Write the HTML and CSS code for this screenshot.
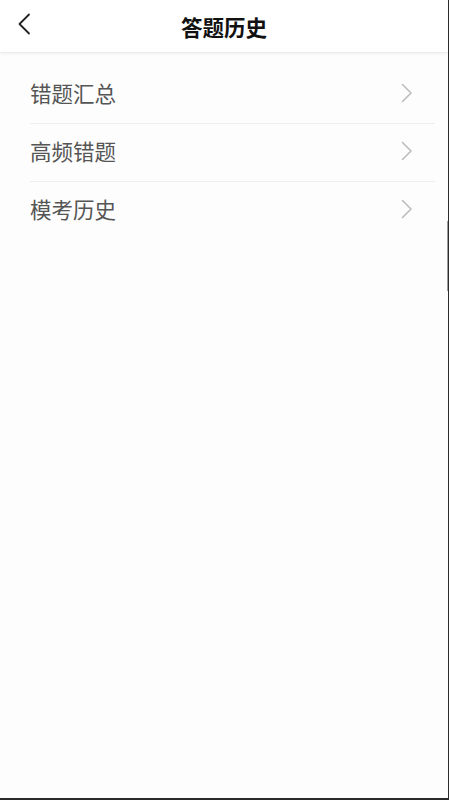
FILE: index.html
```html
<!DOCTYPE html>
<html lang="zh-CN">
<head>
<meta charset="utf-8">
<title>答题历史</title>
<link rel="stylesheet" href="styles.css">
</head>
<body>
<div class="frame">
  <header class="topbar">
    <span class="back">
      <svg width="14" height="22" viewBox="0 0 14 22"><path d="M12 1.5 L2.5 11 L12 20.5" fill="none" stroke="#222" stroke-width="1.8" stroke-linecap="round" stroke-linejoin="round"/></svg>
    </span>
    <h1 class="title">答题历史</h1>
  </header>
  <ul class="list">
    <li class="row"><span class="label">错题汇总</span><svg class="arrow" width="12" height="20" viewBox="0 0 12 20"><path d="M1.5 1.5 L10 10 L1.5 18.5" fill="none" stroke="#bdbdbd" stroke-width="1.6" stroke-linecap="round" stroke-linejoin="round"/></svg></li>
    <li class="row"><span class="label">高频错题</span><svg class="arrow" width="12" height="20" viewBox="0 0 12 20"><path d="M1.5 1.5 L10 10 L1.5 18.5" fill="none" stroke="#bdbdbd" stroke-width="1.6" stroke-linecap="round" stroke-linejoin="round"/></svg></li>
    <li class="row"><span class="label">模考历史</span><svg class="arrow" width="12" height="20" viewBox="0 0 12 20"><path d="M1.5 1.5 L10 10 L1.5 18.5" fill="none" stroke="#bdbdbd" stroke-width="1.6" stroke-linecap="round" stroke-linejoin="round"/></svg></li>
  </ul>
  <span class="scrollmark"></span>
</div>
</body>
</html>
```

FILE: styles.css
```css
html, body {
  margin: 0;
  padding: 0;
  background: #2b2b2b;
}
body {
  font-family: "Noto Sans CJK SC", "Noto Sans", sans-serif;
}
.frame {
  position: relative;
  box-sizing: border-box;
  width: 449px;
  height: 800px;
  background: #fdfdfd;
  border-right: 1px solid #2b2b2b;
  border-bottom: 2px solid #2b2b2b;
  overflow: hidden;
}
.topbar {
  height: 52px;
  background: #fff;
  box-shadow: 0 1px 3px rgba(0,0,0,0.10);
  display: flex;
  align-items: center;
  justify-content: center;
  position: relative;
}
.back {
  position: absolute;
  left: 17px;
  top: 13px;
  display: flex;
}
.title {
  margin: 0;
  font-size: 21.5px;
  font-weight: 700;
  color: #111;
  line-height: 1;
  padding-top: 2px;
}
.list {
  list-style: none;
  margin: 0;
  padding: 14px 13px 0 30px;
}
.row {
  height: 57px;
  display: flex;
  align-items: center;
  justify-content: space-between;
  border-bottom: 1px solid #eeeeee;
  padding-right: 22px;
}
.row:last-child {
  border-bottom: none;
}
.label {
  font-size: 21.5px;
  color: #555;
  line-height: 1;
  padding-bottom: 3px;
}
.arrow {
  display: block;
  margin-bottom: 3px;
}
.scrollmark {
  position: absolute;
  right: 0;
  top: 221px;
  width: 1px;
  height: 70px;
  background: #9a9a9a;
}
```
